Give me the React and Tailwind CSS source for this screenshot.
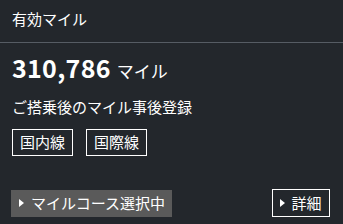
import React from 'react';

const Tri = () => (
  <svg width="5" height="8" viewBox="0 0 5 8" className="shrink-0">
    <path d="M0 0 L5 4 L0 8 Z" fill="#ffffff" />
  </svg>
);

const App = () => {
  return (
    <div
      className="w-[343px] h-[224px] bg-[#23272c] text-white overflow-hidden"
      style={{ fontFamily: '"Noto Sans CJK JP", "Noto Sans", sans-serif' }}
    >
      {/* Header */}
      <div className="h-[43px] border-b border-[#565c64] px-3 flex items-center">
        <span className="text-[15px] leading-none -mt-[6px]">有効マイル</span>
      </div>

      {/* Miles */}
      <div className="px-3 pt-[12px] flex items-baseline gap-[6px]">
        <span className="text-[25px] font-bold leading-none tracking-[0.3px]">310,786</span>
        <span className="text-[17px] leading-none">マイル</span>
      </div>

      <div className="px-3 mt-[19px] text-[15px] leading-none">ご搭乗後のマイル事後登録</div>

      <div className="px-3 mt-[15px] flex gap-[13px]">
        <div className="w-[61px] h-[27px] border border-white flex items-center justify-center text-[15px]">国内線</div>
        <div className="w-[61px] h-[27px] border border-white flex items-center justify-center text-[15px]">国際線</div>
      </div>

      <div className="pl-[11px] pr-[13px] mt-[33px] flex items-center justify-between">
        <div className="w-[161px] h-[27px] bg-[#5a5a5a] flex items-center gap-[7px] pl-[8px] text-[15px]">
          <Tri />
          <span>マイルコース選択中</span>
        </div>
        <div className="w-[58px] h-[28px] border border-white flex items-center justify-center gap-[6px] text-[15px]">
          <Tri />
          <span>詳細</span>
        </div>
      </div>
    </div>
  );
};

export default App;
